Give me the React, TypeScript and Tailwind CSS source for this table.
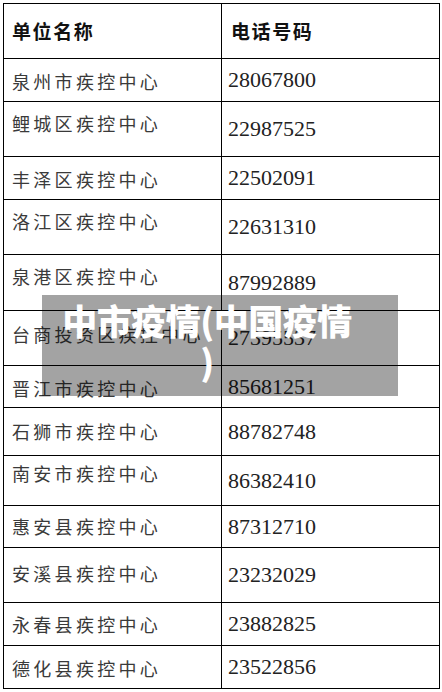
const rows = [
  { name: '泉州市疾控中心', phone: '28067800', h: 'h-[43px]', pt: 'pt-[10px]' },
  { name: '鲤城区疾控中心', phone: '22987525', h: 'h-[55px]', pt: 'pt-[9px]' },
  { name: '丰泽区疾控中心', phone: '22502091', h: 'h-[43px]', pt: 'pt-[10px]' },
  { name: '洛江区疾控中心', phone: '22631310', h: 'h-[55px]', pt: 'pt-[9px]' },
  { name: '泉港区疾控中心', phone: '87992889', h: 'h-[56px]', pt: 'pt-[9px]' },
  { name: '台商投资区疾控中心', phone: '27395537', h: 'h-[55px]', pt: 'pt-[11px]' },
  { name: '晋江市疾控中心', phone: '85681251', h: 'h-[42px]', pt: 'pt-[10px]' },
  { name: '石狮市疾控中心', phone: '88782748', h: 'h-[48px]', pt: 'pt-[11px]' },
  { name: '南安市疾控中心', phone: '86382410', h: 'h-[50px]', pt: 'pt-[5px]' },
  { name: '惠安县疾控中心', phone: '87312710', h: 'h-[42px]', pt: 'pt-[8px]' },
  { name: '安溪县疾控中心', phone: '23232029', h: 'h-[55px]', pt: 'pt-[13px]' },
  { name: '永春县疾控中心', phone: '23882825', h: 'h-[43px]', pt: 'pt-[9px]' },
  { name: '德化县疾控中心', phone: '23522856', h: 'h-[42px]', pt: 'pt-[10px]' },
]

const cjk = "font-['Noto_Sans_CJK_SC',sans-serif]"
const serif = "font-['Liberation_Serif','Noto_Sans_CJK_SC',serif]"

export default function App() {
  return (
    <div className="relative h-[692px] w-[442px] overflow-hidden bg-white pl-[3px] pt-[3px]">
      <div className="w-[437px] border border-black">
        <div className="grid h-[55px] grid-cols-[218px_1fr] border-b border-black">
          <div
            className={`flex items-center border-r border-black pl-[8px] text-[19px] font-bold tracking-[1.6px] text-[#111] ${cjk}`}
          >
            单位名称
          </div>
          <div
            className={`flex items-center pl-[9px] text-[19px] font-bold tracking-[1.6px] text-[#111] ${cjk}`}
          >
            电话号码
          </div>
        </div>
        {rows.map((r, i) => (
          <div
            key={r.phone}
            className={`grid grid-cols-[218px_1fr] ${r.h} ${
              i < rows.length - 1 ? 'border-b border-black' : ''
            }`}
          >
            <div
              className={`border-r border-black pl-[8px] ${r.pt} text-[18px] leading-[24px] tracking-[3.3px] whitespace-nowrap text-[#3a3a3a] ${cjk}`}
            >
              {r.name}
            </div>
            <div
              className={`flex items-center pl-[6px] text-[22px] leading-[24px] text-[#222] ${serif}`}
            >
              {r.phone}
            </div>
          </div>
        ))}
      </div>

      {/* title banner laid over the table */}
      <div className="absolute left-[42px] top-[295px] h-[101px] w-[356px] bg-[rgba(0,0,0,0.36)] pl-[17px] pt-[4px]">
        <div
          className={`w-[296px] whitespace-nowrap text-center text-[35px] font-black leading-[41px] tracking-[-0.5px] text-white ${cjk}`}
        >
          中市疫情(中国疫情
          <br />)
        </div>
      </div>
    </div>
  )
}
